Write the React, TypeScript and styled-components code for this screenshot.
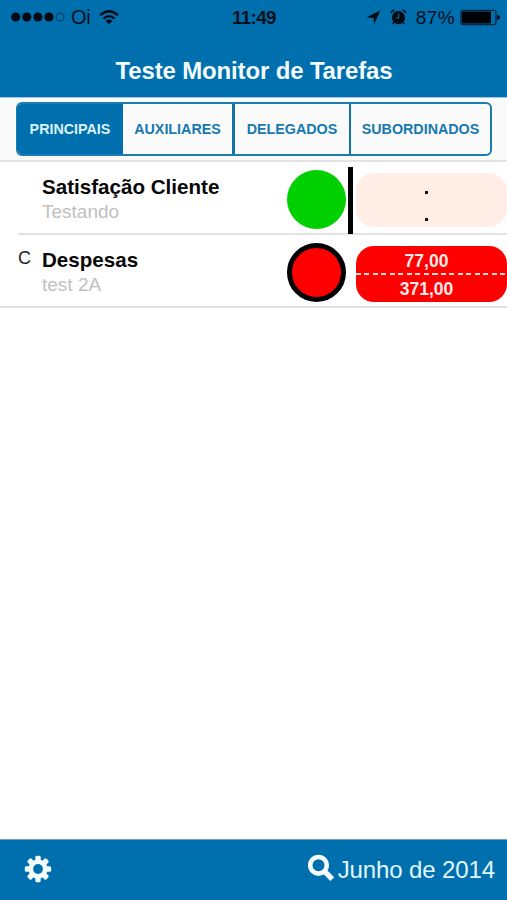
import React from "react";
import styled, { createGlobalStyle } from "styled-components";

const BLUE = "#006fae";

const GlobalStyle = createGlobalStyle`
  * { box-sizing: border-box; }
  body { margin: 0; background: #fff; font-family: "Liberation Sans", Arial, sans-serif; }
`;

const Screen = styled.div`
  width: 507px;
  height: 900px;
  display: flex;
  flex-direction: column;
  overflow: hidden;
  white-space: nowrap;
  background: #fff;
`;

const Header = styled.header`
  height: 98px;
  background: ${BLUE};
  border-bottom: 1px solid #a3c4d8;
`;

const StatusBar = styled.div`
  height: 36px;
  display: grid;
  grid-template-columns: 221px auto 1fr;
  align-items: center;
  padding: 0 7px 2px 11px;
  color: #03101c;
  font-size: 19px;
  line-height: 22px;
`;

const StatusGroup = styled.div<{ $end?: boolean }>`
  display: flex;
  align-items: center;
  justify-content: ${(p) => (p.$end ? "flex-end" : "flex-start")};
`;

const Signal = styled.svg`
  width: 54px;
  height: 12px;
  margin-right: 6px;
`;

const Carrier = styled.span`
  width: 19px;
  font-size: 20px;
  letter-spacing: -0.4px;
`;

const Wifi = styled.svg`
  width: 20px;
  height: 15px;
  margin-left: 9px;
`;

const Clock = styled.time`
  padding-top: 2px;
  font-weight: bold;
  font-size: 18.8px;
  letter-spacing: -0.65px;
`;

const Arrow = styled.svg`
  width: 15px;
  height: 15px;
  margin-right: 9px;
`;

const Alarm = styled.svg`
  width: 17px;
  height: 16px;
  margin-right: 9px;
`;

const Battery = styled.svg`
  width: 40px;
  height: 17px;
  margin-left: 5px;
`;

const Charge = styled.span`
  padding-top: 2px;
  font-size: 19px;
  letter-spacing: 0.4px;
`;

const Title = styled.h1`
  margin: 21px 0 0;
  padding-left: 1px;
  color: #f4fcff;
  font-size: 24px;
  line-height: 28px;
  text-align: center;
  letter-spacing: -0.15px;
`;

const TabArea = styled.nav`
  height: 64px;
  padding: 4px 15px 0 16px;
  background: #fafafa;
  border-bottom: 2px solid #e3e3e3;
`;

const Tabs = styled.div`
  height: 54px;
  display: grid;
  grid-template-columns: 106px 112px 116px 1fr;
  border: 2px solid #1b7cb0;
  border-width: 2px 2px 2px 1px;
  border-radius: 6px;
  overflow: hidden;
`;

const Tab = styled.button<{ $active?: boolean; $divider?: number }>`
  border: 0;
  border-right: ${(p) => p.$divider ?? 0}px solid #1473ab;
  padding: 0 0 1px;
  background: ${(p) => (p.$active ? BLUE : "transparent")};
  color: ${(p) => (p.$active ? "#d9f3ff" : "#1679b0")};
  font: bold 14.3px "Liberation Sans", Arial, sans-serif;
  white-space: nowrap;
`;

const List = styled.main`
  flex: 1;
`;

const Row = styled.article<{ $last?: boolean }>`
  height: 73px;
  display: grid;
  grid-template-columns: 25px 244px 60px 9px 151px;
  margin-left: ${(p) => (p.$last ? 0 : 18)}px;
  padding-left: ${(p) => (p.$last ? 18 : 0)}px;
  border-bottom: 2px solid #e2e2e2;
`;

const Mark = styled.span`
  padding-top: 13px;
  font-size: 18px;
  line-height: 20px;
  color: #222;
`;

const Task = styled.div`
  padding-top: 13px;
`;

const TaskName = styled.h2`
  margin: 0 0 0 -1px;
  font-size: 20.6px;
  line-height: 24px;
  color: #080808;
`;

const TaskNote = styled.p`
  margin: 2px 0 0 -1px;
  font-size: 19px;
  line-height: 22px;
  color: #c0c0c0;
`;

const Light = styled.div<{ $color: string; $ring?: boolean }>`
  width: 59px;
  height: 59px;
  margin: 8px 0 0 0.4px;
  border-radius: 50%;
  background: ${(p) => p.$color};
  border: ${(p) => (p.$ring ? "5px solid #000" : "0")};
`;

const Marker = styled.div<{ $visible?: boolean }>`
  width: 5px;
  height: 67px;
  margin: 5px 0 0 1px;
  background: ${(p) => (p.$visible ? "#000" : "transparent")};
`;

const Values = styled.div<{ $alert?: boolean }>`
  height: ${(p) => (p.$alert ? 56 : 54)}px;
  margin-top: 11px;
  display: grid;
  grid-template-rows: ${(p) => (p.$alert ? 27 : 26)}px 2px 1fr;
  border-radius: 18px;
  overflow: hidden;
  text-align: center;
  background: ${(p) => (p.$alert ? "#fe0000" : "#feeee5")};
  color: ${(p) => (p.$alert ? "#ffeaea" : "#000")};
  font-weight: bold;
  font-size: 17.5px;
  line-height: 27px;
`;

const Value = styled.span<{ $pad?: number }>`
  padding-top: ${(p) => p.$pad ?? 0}px;
  padding-right: 10px;
`;

const Dash = styled.i<{ $visible?: boolean }>`
  background: ${(p) =>
    p.$visible
      ? "repeating-linear-gradient(90deg, #ffd9d9 0 5px, transparent 5px 8.5px)"
      : "none"};
`;

const Dot = styled.i<{ $top: number }>`
  width: 3px;
  height: 3px;
  margin: ${(p) => p.$top}px 0 0 69px;
  background: #171310;
`;

const Footer = styled.footer`
  height: 61px;
  display: flex;
  align-items: center;
  justify-content: space-between;
  padding: 0 12px 2px 24px;
  background: ${BLUE};
  border-top: 1px solid #719eb3;
  color: #e0f8ff;
`;

const Action = styled.button`
  display: flex;
  align-items: center;
  padding: 0;
  border: 0;
  background: none;
  color: inherit;
  font: 24px/28px "Liberation Sans", Arial, sans-serif;
`;

const Gear = styled.svg`
  width: 28px;
  height: 28px;
  color: #f6fdff;
`;

const Search = styled.svg`
  width: 28px;
  height: 28px;
  margin: -2px 3px 0 0;
  color: #f6fdff;
`;

const Month = styled.span`
  padding-top: 2px;
  letter-spacing: -0.12px;
`;

export default function App() {
  return (
    <Screen>
      <GlobalStyle />
      <Header>
        <StatusBar>
          <StatusGroup>
            <Signal viewBox="0 0 54 12">
              {[4.7, 15.8, 26.9, 38].map((x) => (
                <circle key={x} cx={x} cy="6" r="4.6" fill="#020b14" />
              ))}
              <circle cx="49" cy="6" r="3.9" fill="none" stroke="#043e62" strokeWidth="1.1" />
            </Signal>
            <Carrier>Oi</Carrier>
            <Wifi viewBox="0 0 20 15" fill="none" stroke="#020b14" strokeWidth="2.3">
              <path d="M1.1 5.2Q10-2.6 18.9 5.2" />
              <path d="M4.5 8.6Q10 3.7 15.5 8.6" />
              <path d="M6.8 10.9Q10 8.1 13.2 10.9L10 14.2Z" fill="#020b14" stroke="none" />
            </Wifi>
          </StatusGroup>
          <Clock>11:49</Clock>
          <StatusGroup $end>
            <Arrow viewBox="0 0 15 15">
              <path d="M14.4.6 8.1 14.3 7.5 7.9.5 7.3Z" fill="#020b14" />
            </Arrow>
            <Alarm viewBox="0 0 17 16">
              <circle cx="8.5" cy="8.7" r="6.6" fill="#020b14" />
              <path d="M1.2 4.2Q1.6 1.7 4.4 1M15.8 4.2Q15.4 1.7 12.6 1M4.1 13.1 2.7 15M12.9 13.1 14.3 15" stroke="#020b14" strokeWidth="1.4" fill="none" />
              <path d="M8.7 4.8V9H5.7" fill="none" stroke="#1b6795" strokeWidth="1.2" />
            </Alarm>
            <Charge>87%</Charge>
            <Battery viewBox="0 0 40 17">
              <rect x="1" y="1.4" width="35" height="14.2" rx="2" fill="none" stroke="#03243a" strokeWidth="1.3" />
              <rect x="2" y="2.6" width="29" height="11.8" rx=".7" fill="#010407" />
              <path d="M37.2 6Q40 6.3 40 8.5T37.2 11Z" fill="#020b14" />
            </Battery>
          </StatusGroup>
        </StatusBar>
        <Title>Teste Monitor de Tarefas</Title>
      </Header>
      <TabArea>
        <Tabs>
          <Tab $active>PRINCIPAIS</Tab>
          <Tab $divider={3}>AUXILIARES</Tab>
          <Tab $divider={2}>DELEGADOS</Tab>
          <Tab>SUBORDINADOS</Tab>
        </Tabs>
      </TabArea>
      <List>
        <Row>
          <Mark />
          <Task>
            <TaskName>Satisfação Cliente</TaskName>
            <TaskNote>Testando</TaskNote>
          </Task>
          <Light $color="#00cf00" />
          <Marker $visible />
          <Values>
            <Dot $top={18} />
            <Dash />
            <Dot $top={17} />
          </Values>
        </Row>
        <Row $last>
          <Mark>C</Mark>
          <Task>
            <TaskName>Despesas</TaskName>
            <TaskNote>test 2A</TaskNote>
          </Task>
          <Light $color="#fe0000" $ring />
          <Marker />
          <Values $alert>
            <Value $pad={2}>77,00</Value>
            <Dash $visible />
            <Value $pad={1}>371,00</Value>
          </Values>
        </Row>
      </List>
      <Footer>
        <Action aria-label="Configurações">
          <Gear viewBox="0 0 28 28">
            <g fill="currentColor">
              {[0, 45, 90, 135].map((angle) => (
                <rect key={angle} x="11.3" y=".8" width="5.4" height="26.4" rx="1.5" transform={`rotate(${angle} 14 14)`} />
              ))}
              <circle cx="14" cy="14" r="9.6" />
            </g>
            <circle cx="14" cy="14" r="4.9" fill={BLUE} />
          </Gear>
        </Action>
        <Action>
          <Search viewBox="0 0 28 28" fill="none" stroke="currentColor">
            <circle cx="11.5" cy="11.3" r="8.3" strokeWidth="4.6" />
            <path d="M17.5 17.3 25.3 25.1" strokeWidth="5.4" />
          </Search>
          <Month>Junho de 2014</Month>
        </Action>
      </Footer>
    </Screen>
  );
}
